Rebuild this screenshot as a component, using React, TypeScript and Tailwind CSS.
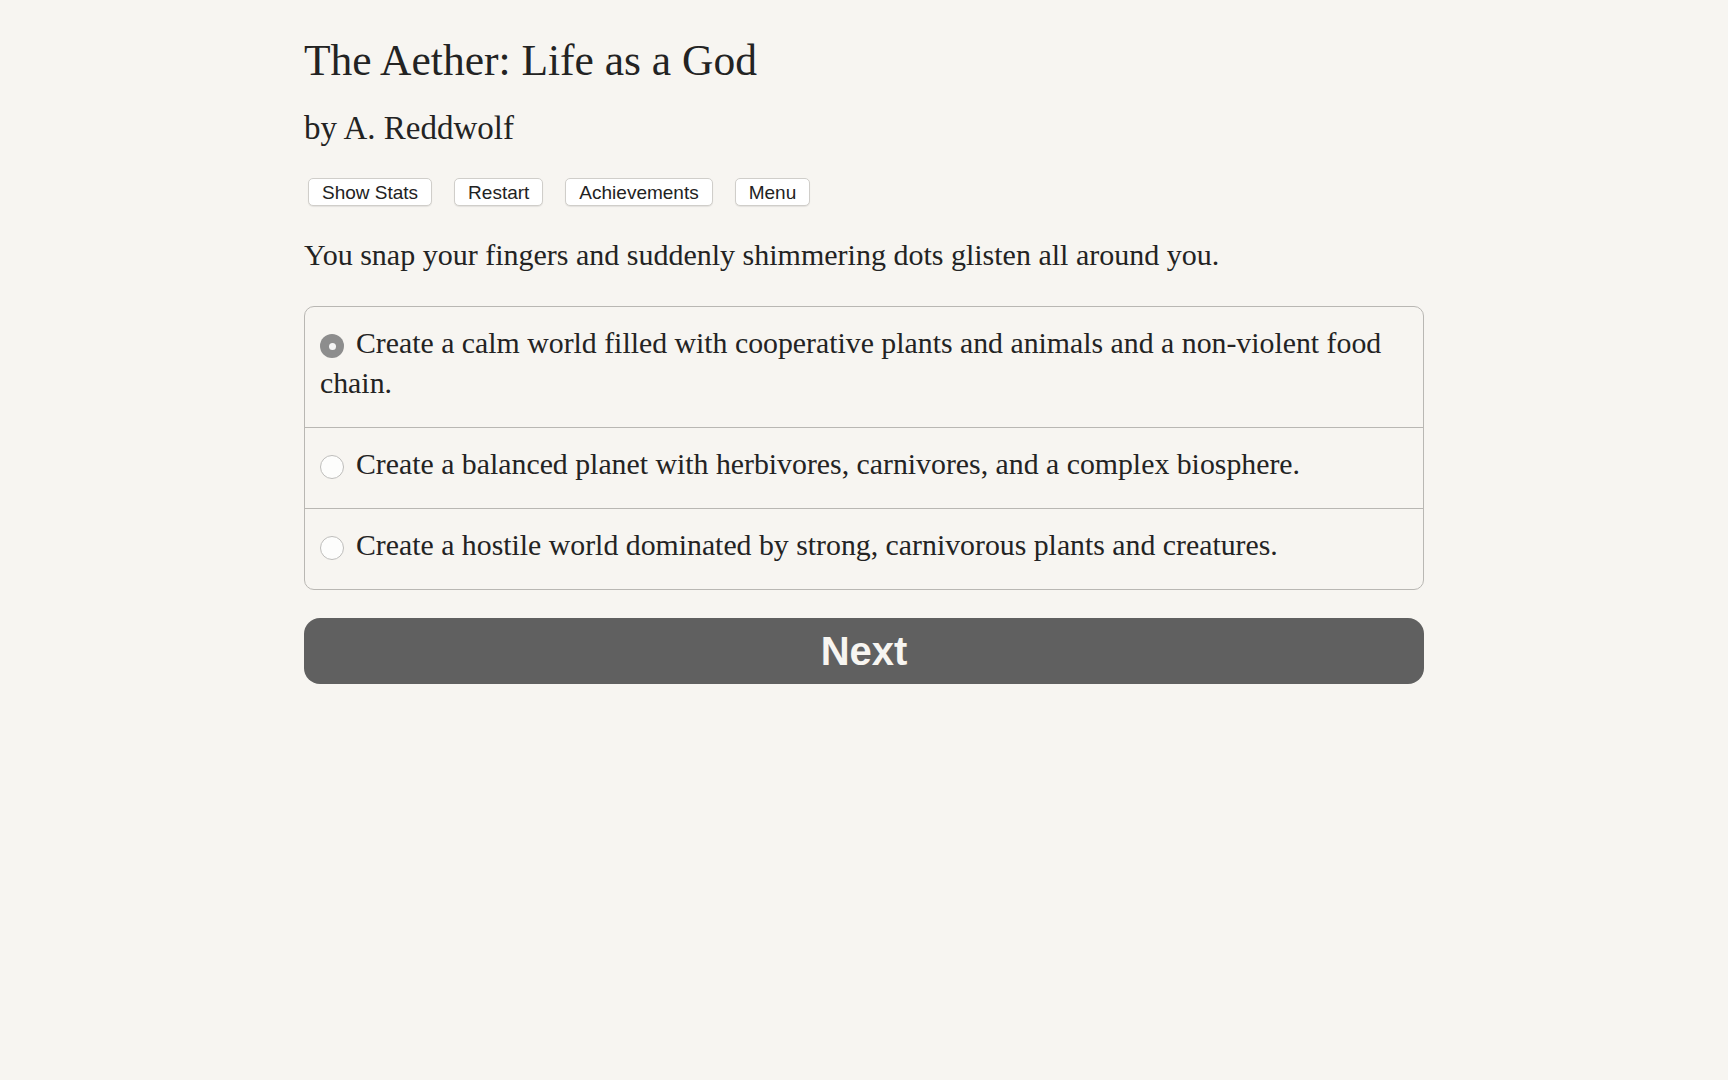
import { useState } from 'react'

const choices = [
  'Create a calm world filled with cooperative plants and animals and a non-violent food chain.',
  'Create a balanced planet with herbivores, carnivores, and a complex biosphere.',
  'Create a hostile world dominated by strong, carnivorous plants and creatures.',
]

function Radio({ checked }: { checked: boolean }) {
  return checked ? (
    <span className="inline-flex w-6 h-6 mr-3 rounded-full bg-[#8d8d8d] align-middle items-center justify-center">
      <span className="w-[7px] h-[7px] rounded-full bg-[#f4f4f4]" />
    </span>
  ) : (
    <span className="inline-block w-6 h-6 mr-3 rounded-full bg-[#fdfdfc] border-[1.5px] border-[#bebdbb] align-middle" />
  )
}

export default function App() {
  const [selected, setSelected] = useState(0)

  return (
    <div className="min-h-screen bg-[#f7f5f1] text-[#232323] font-['Liberation_Serif','Times_New_Roman',serif]">
      <div className="max-w-[1120px] mx-auto pt-[36px]">
        <h1 className="text-[43.5px] leading-[48px] font-normal">The Aether: Life as a God</h1>
        <h2 className="mt-[24px] text-[33px] leading-[40px] font-normal">by A. Reddwolf</h2>

        <div className="mt-[30px] ml-[4px] flex gap-[22px] font-['Liberation_Sans',Arial,sans-serif]">
          {['Show Stats', 'Restart', 'Achievements', 'Menu'].map((label) => (
            <button
              key={label}
              className="h-[28px] px-[13px] pt-[1px] flex items-center bg-white border border-[#d0ceca] rounded-[5px] text-[19px] leading-none text-[#222] shadow-[0_1px_1px_rgba(0,0,0,0.08)]"
            >
              {label}
            </button>
          ))}
        </div>

        <p className="mt-[29px] text-[30px] leading-[40px]">
          You snap your fingers and suddenly shimmering dots glisten all around you.
        </p>

        <div className="mt-[31px] border border-[#b9b7b3] rounded-[10px] overflow-hidden">
          {choices.map((text, i) => (
            <div
              key={i}
              onClick={() => setSelected(i)}
              className={`pl-[15px] pr-4 pt-4 pb-6 text-[29.8px] leading-[40px] cursor-pointer ${i > 0 ? 'border-t border-[#b9b7b3]' : ''}`}
            >
              <Radio checked={selected === i} />
              {text}
            </div>
          ))}
        </div>

        <button className="mt-[28px] w-full h-[66px] rounded-[16px] bg-[#606060] text-[#f7f5f1] text-[40px] font-bold font-['Liberation_Sans',Arial,sans-serif] flex items-center justify-center">
          Next
        </button>
      </div>
    </div>
  )
}
